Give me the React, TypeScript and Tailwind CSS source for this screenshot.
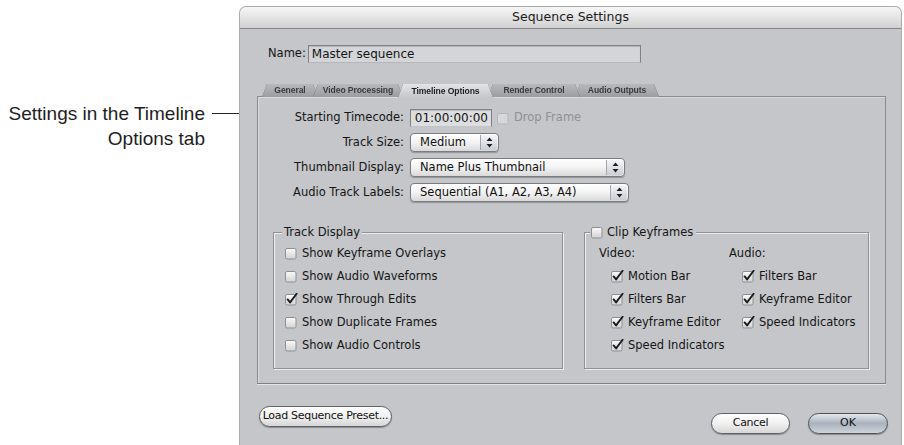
import React from "react";

const ui = "font-['DejaVu_Sans',sans-serif]";

function CheckBox({ on, dim }: { on?: boolean; dim?: boolean }) {
  return (
    <svg width="13" height="13" viewBox="0 0 13 13" className="shrink-0">
      <defs>
        <linearGradient id="cbFill" x1="0" y1="0" x2="0" y2="1">
          <stop offset="0" stopColor="#fbfbfb" />
          <stop offset="0.5" stopColor="#e6e6e6" />
          <stop offset="1" stopColor="#d2d2d2" />
        </linearGradient>
      </defs>
      <rect
        x="0.5"
        y="1.5"
        width="10.5"
        height="10.5"
        rx="1.5"
        fill={dim ? "#d6d7d9" : "url(#cbFill)"}
        stroke={dim ? "#b3b5b8" : "#8d8f92"}
      />
      {on && (
        <path
          d="M2.6 6.4 L5.1 9.4 L11.6 0.8"
          stroke="#1b1b1b"
          strokeWidth="1.9"
          fill="none"
          strokeLinecap="round"
          strokeLinejoin="round"
        />
      )}
    </svg>
  );
}

function Arrows() {
  return (
    <svg width="7" height="11" viewBox="0 0 7 11">
      <path d="M3.5 0.5 L6.5 4 L0.5 4 Z" fill="#222" />
      <path d="M3.5 10.5 L6.5 7 L0.5 7 Z" fill="#222" />
    </svg>
  );
}

function Popup({ value, width }: { value: string; width: string }) {
  return (
    <div
      className={`${width} h-[19px] flex items-stretch rounded-[4px] border border-[#7a7c7f] bg-gradient-to-b from-white via-[#f3f3f3] to-[#d9d9d9] shadow-[0_1px_1px_rgba(0,0,0,0.25)]`}
    >
      <span className="flex-1 pl-[9px] leading-[17px] text-[#111] whitespace-nowrap">{value}</span>
      <span className="w-[17px] my-[1px] mr-[1px] rounded-r-[3px] border-l border-[#a4a6a9] bg-gradient-to-b from-[#f4f6f9] to-[#c9ced6] flex items-center justify-center">
        <Arrows />
      </span>
    </div>
  );
}

function CheckRow({ label, on }: { label: string; on?: boolean }) {
  return (
    <div className="h-[23px] flex items-center gap-[4px] whitespace-nowrap">
      <CheckBox on={on} />
      <span>{label}</span>
    </div>
  );
}

const tabs = [
  { label: "General", w: "w-[56px]", z: "z-[1]" },
  { label: "Video Processing", w: "w-[90px]", z: "z-[2]" },
  { label: "Timeline Options", w: "w-[95px]", z: "z-[6]", active: true },
  { label: "Render Control", w: "w-[92px]", z: "z-[4]" },
  { label: "Audio Outputs", w: "w-[84px]", z: "z-[3]" },
];

const pill =
  "h-[21px] rounded-full border border-[#5f6164] bg-gradient-to-b from-white via-[#f0f0f0] to-[#d6d6d6] shadow-[0_1px_1px_rgba(0,0,0,0.3)] text-[11px] tracking-[-0.3px] text-[#111] whitespace-nowrap";

export default function App() {
  return (
    <div className="w-[904px] h-[445px] overflow-hidden bg-white flex">
      {/* callout on the left */}
      <div className="w-[239px] shrink-0 pt-[101px] font-['Liberation_Sans',Arial,sans-serif] text-[19px] leading-[25px] text-[#1e1e1e]">
        <div className="flex items-center">
          <span className="w-[205px] text-right">Settings in the Timeline</span>
          <span className="ml-[7px] w-[27px] h-[1.5px] bg-[#222]" />
        </div>
        <div className="w-[205px] text-right">Options tab</div>
      </div>

      {/* dialog */}
      <div
        className={`${ui} mt-[6px] w-[663px] h-[460px] shrink-0 rounded-t-[7px] border-l border-r border-t border-[#a9abae] bg-[#c4c6c9] text-[11.5px] text-[#151515] flex flex-col`}
      >
        <div className="h-[22px] shrink-0 rounded-t-[6px] bg-gradient-to-b from-[#f6f6f6] via-[#e4e4e4] to-[#d0d0d0] border-b border-[#848688] flex items-center justify-center text-[12.5px] text-[#1c1c1c]">
          Sequence Settings
        </div>

        <div className="flex items-center mt-[16px] pl-[28px]">
          <span className="whitespace-nowrap mr-[2px]">Name:</span>
          <div className="w-[333px] h-[18px] border border-[#7f8184] border-b-[#b5b7ba] bg-[#d3d5d8] shadow-[inset_0_1px_1px_rgba(0,0,0,0.15)] pl-[3px] leading-[16px] text-[12px]">
            Master sequence
          </div>
        </div>

        {/* tabs */}
        <div className="relative z-10 flex mt-[21px] ml-[22px] h-[13px] mb-[-1px]">
          {tabs.map((t, i) => (
            <div
              key={t.label}
              className={`${t.w} ${t.z} relative ${i > 0 ? "-ml-[5px]" : ""} drop-shadow-[0_0_0.6px_#55575a]`}
            >
              <div
                className={`[clip-path:polygon(5px_0,calc(100%-5px)_0,100%_100%,0_100%)] flex items-center justify-center font-['Liberation_Sans',Arial,sans-serif] font-bold text-[8.6px] tracking-[-0.1px] whitespace-nowrap ${
                  t.active
                    ? "h-[14px] bg-gradient-to-b from-[#e2e4e6] to-[#c4c6c9] text-[#1f1f1f]"
                    : "h-[13px] bg-gradient-to-b from-[#b7b9bc] to-[#9b9da0] text-[#3b3b3b]"
                }`}
              >
                {t.label}
              </div>
            </div>
          ))}
        </div>

        {/* tab panel */}
        <div className="ml-[17px] mr-[15px] h-[288px] shrink-0 border border-[#898b8e] border-b-[#7d7f82] shadow-[0_1px_0_#e4e5e7,inset_1px_1px_0_#d8dadc] bg-[#c4c6c9] pt-[12px]">
          <div className="flex flex-col gap-[6px]">
            <div className="flex items-center h-[18px]">
              <span className="w-[146px] text-right">Starting Timecode:</span>
              <div className="ml-[6px] w-[82px] h-[18px] border border-[#7f8184] border-b-[#c2c4c6] bg-[#dcdedf] text-[12px] leading-[16px] text-right pr-[3px] shadow-[inset_0_1px_1px_rgba(0,0,0,0.15)]">
                01:00:00:00
              </div>
              <span className="ml-[5px] mt-[1px]">
                <CheckBox dim />
              </span>
              <span className="ml-[4px] text-[#8f9194]">Drop Frame</span>
            </div>
            <div className="flex items-center">
              <span className="w-[146px] text-right">Track Size:</span>
              <div className="ml-[6px]">
                <Popup value="Medium" width="w-[89px]" />
              </div>
            </div>
            <div className="flex items-center">
              <span className="w-[146px] text-right">Thumbnail Display:</span>
              <div className="ml-[6px]">
                <Popup value="Name Plus Thumbnail" width="w-[215px]" />
              </div>
            </div>
            <div className="flex items-center">
              <span className="w-[146px] text-right">Audio Track Labels:</span>
              <div className="ml-[6px]">
                <Popup value="Sequential (A1, A2, A3, A4)" width="w-[219px]" />
              </div>
            </div>
          </div>

          <div className="flex gap-[21px] pl-[15px] mt-[30px]">
            {/* Track Display group */}
            <div className="relative w-[290px] h-[137px] border border-[#8e9093] shadow-[1px_1px_0_#eceef0,inset_1px_1px_0_#eceef0] pt-[9px] pl-[11px]">
              <span className="absolute -top-[8px] left-[8px] px-[2px] bg-[#c4c6c9] leading-[15px]">
                Track Display
              </span>
              <CheckRow label="Show Keyframe Overlays" />
              <CheckRow label="Show Audio Waveforms" />
              <CheckRow label="Show Through Edits" on />
              <CheckRow label="Show Duplicate Frames" />
              <CheckRow label="Show Audio Controls" />
            </div>

            {/* Clip Keyframes group */}
            <div className="relative w-[285px] h-[137px] border border-[#8e9093] shadow-[1px_1px_0_#eceef0,inset_1px_1px_0_#eceef0] pt-[9px] pl-[14px] flex">
              <span className="absolute -top-[8px] left-[5px] pl-[1px] pr-[3px] bg-[#c4c6c9] leading-[15px] flex items-center gap-[3px]">
                <CheckBox />
                Clip Keyframes
              </span>
              <div className="w-[130px]">
                <div className="h-[23px] flex items-center">Video:</div>
                <div className="pl-[12px]">
                  <CheckRow label="Motion Bar" on />
                  <CheckRow label="Filters Bar" on />
                  <CheckRow label="Keyframe Editor" on />
                  <CheckRow label="Speed Indicators" on />
                </div>
              </div>
              <div>
                <div className="h-[23px] flex items-center">Audio:</div>
                <div className="pl-[13px]">
                  <CheckRow label="Filters Bar" on />
                  <CheckRow label="Keyframe Editor" on />
                  <CheckRow label="Speed Indicators" on />
                </div>
              </div>
            </div>
          </div>
        </div>

        {/* buttons */}
        <div className="flex items-start mt-[22px] pl-[19px] pr-[13px]">
          <button className={`${pill} w-[133px]`}>Load Sequence Preset...</button>
          <div className="ml-auto mt-[7px] flex gap-[18px]">
            <button className={`${pill} w-[79px]`}>Cancel</button>
            <button className="w-[80px] h-[21px] rounded-full border border-[#4e5257] bg-gradient-to-b from-[#e4e8ee] via-[#a9b2bd] to-[#cdd3da] shadow-[0_1px_1px_rgba(0,0,0,0.3)] text-[11px] text-[#111]">
              OK
            </button>
          </div>
        </div>
      </div>
    </div>
  );
}
